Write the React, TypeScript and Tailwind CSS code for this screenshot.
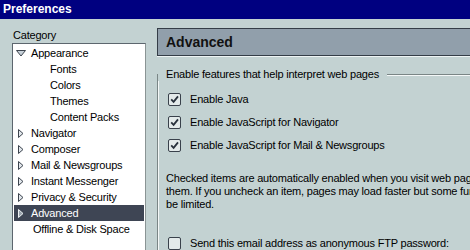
import React from "react";

type Kind = "down" | "right" | "child" | "leaf";
interface Item {
  t: string;
  k: Kind;
  sel?: boolean;
}

const items: Item[] = [
  { t: "Appearance", k: "down" },
  { t: "Fonts", k: "child" },
  { t: "Colors", k: "child" },
  { t: "Themes", k: "child" },
  { t: "Content Packs", k: "child" },
  { t: "Navigator", k: "right" },
  { t: "Composer", k: "right" },
  { t: "Mail & Newsgroups", k: "right" },
  { t: "Instant Messenger", k: "right" },
  { t: "Privacy & Security", k: "right" },
  { t: "Advanced", k: "right", sel: true },
  { t: "Offline & Disk Space", k: "leaf" },
];

const Down = () => (
  <svg width="10" height="7" viewBox="0 0 10 7">
    <path d="M0.5 0.5 H9.5 L5 6 Z" fill="#c6d0d8" stroke="#3c444e" strokeWidth="1" strokeLinejoin="round" />
  </svg>
);

const Right = ({ sel }: { sel?: boolean }) => (
  <svg width="6" height="9" viewBox="0 0 6 9">
    <path
      d="M0.5 0.5 L5 4.5 L0.5 8.5 Z"
      fill={sel ? "#9aa3ad" : "#e2e7ec"}
      stroke={sel ? "#eef2f4" : "#3c444e"}
      strokeWidth="1"
      strokeLinejoin="round"
    />
  </svg>
);

const Check = ({ checked }: { checked?: boolean }) => (
  <div className="w-[13px] h-[13px] shrink-0 rounded-[2px] border border-[#39414b] bg-[#e3eaea] flex items-center justify-center">
    {checked && (
      <svg width="9" height="9" viewBox="0 0 9 9">
        <path d="M1.2 4.4 L3.6 6.8 L8 1.4" fill="none" stroke="#28313c" strokeWidth="1.8" />
      </svg>
    )}
  </div>
);

const Row = ({ item }: { item: Item }) => {
  const base = "h-[16px] flex items-center whitespace-nowrap";
  const cls = item.sel ? base + " bg-[#3e4554] text-white" : base;
  if (item.k === "child") {
    return <div className={cls + " pl-[36px]"}>{item.t}</div>;
  }
  if (item.k === "leaf") {
    return <div className={cls + " pl-[19px]"}>{item.t}</div>;
  }
  return (
    <div className={cls}>
      <span className="w-[12px] ml-[1px] flex justify-center items-center">
        {item.k === "down" ? <Down /> : <Right sel={item.sel} />}
      </span>
      <span className="ml-[4px]">{item.t}</span>
    </div>
  );
};

const CheckRow = ({ checked, label, className }: { checked?: boolean; label: string; className?: string }) => (
  <div className={"h-[23px] flex items-center pl-[2px] whitespace-nowrap " + (className ?? "")}>
    <Check checked={checked} />
    <span className="ml-[9px]">{label}</span>
  </div>
);

export default function App() {
  return (
    <div className="w-[470px] h-[250px] overflow-hidden bg-[#c3d2d2] font-['Liberation_Sans',Arial,sans-serif] text-[11px] tracking-[-0.2px] text-black">
      <div className="h-[19px] bg-[#000080] text-white font-bold text-[12px] tracking-normal leading-[19px] pl-[3px]">
        Preferences
      </div>
      <div className="flex">
        <div className="w-[146px] shrink-0 pl-[12px]">
          <div className="mt-[10px] leading-[13px] pl-[1px]">Category</div>
          <div className="mt-[1px] h-[220px] bg-white border border-[#8a9494] border-l-[#5c666e] border-t-[#5c666e] p-[1px]">
            {items.map((it) => (
              <Row key={it.t} item={it} />
            ))}
          </div>
        </div>
        <div className="ml-[11px] w-[340px] shrink-0 pt-[9px]">
          <div className="h-[28px] border border-[#343d47] bg-[#919fab] shadow-[0_1px_0_#eef4f4] pl-[8px] flex items-center font-bold text-[14px] tracking-normal text-[#111]">
            Advanced
          </div>
          <fieldset className="mt-[12px] border-l border-t border-[#7a8686] shadow-[inset_1px_1px_0_#f4f8f8] min-w-0">
            <legend className="px-[8px] leading-[13px] bg-[#c3d2d2]">Enable features that help interpret web pages</legend>
            <div className="pt-[7px] pl-[8px]">
              <CheckRow checked label="Enable Java" />
              <CheckRow checked label="Enable JavaScript for Navigator" />
              <CheckRow checked label="Enable JavaScript for Mail & Newsgroups" />
              <div className="mt-[15px] leading-[13px] whitespace-nowrap">
                <div>Checked items are automatically enabled when you visit web pages that use</div>
                <div>them. If you uncheck an item, pages may load faster but some functionality may</div>
                <div>be limited.</div>
              </div>
              <CheckRow className="mt-[21px]" label="Send this email address as anonymous FTP password:" />
            </div>
          </fieldset>
        </div>
      </div>
    </div>
  );
}
